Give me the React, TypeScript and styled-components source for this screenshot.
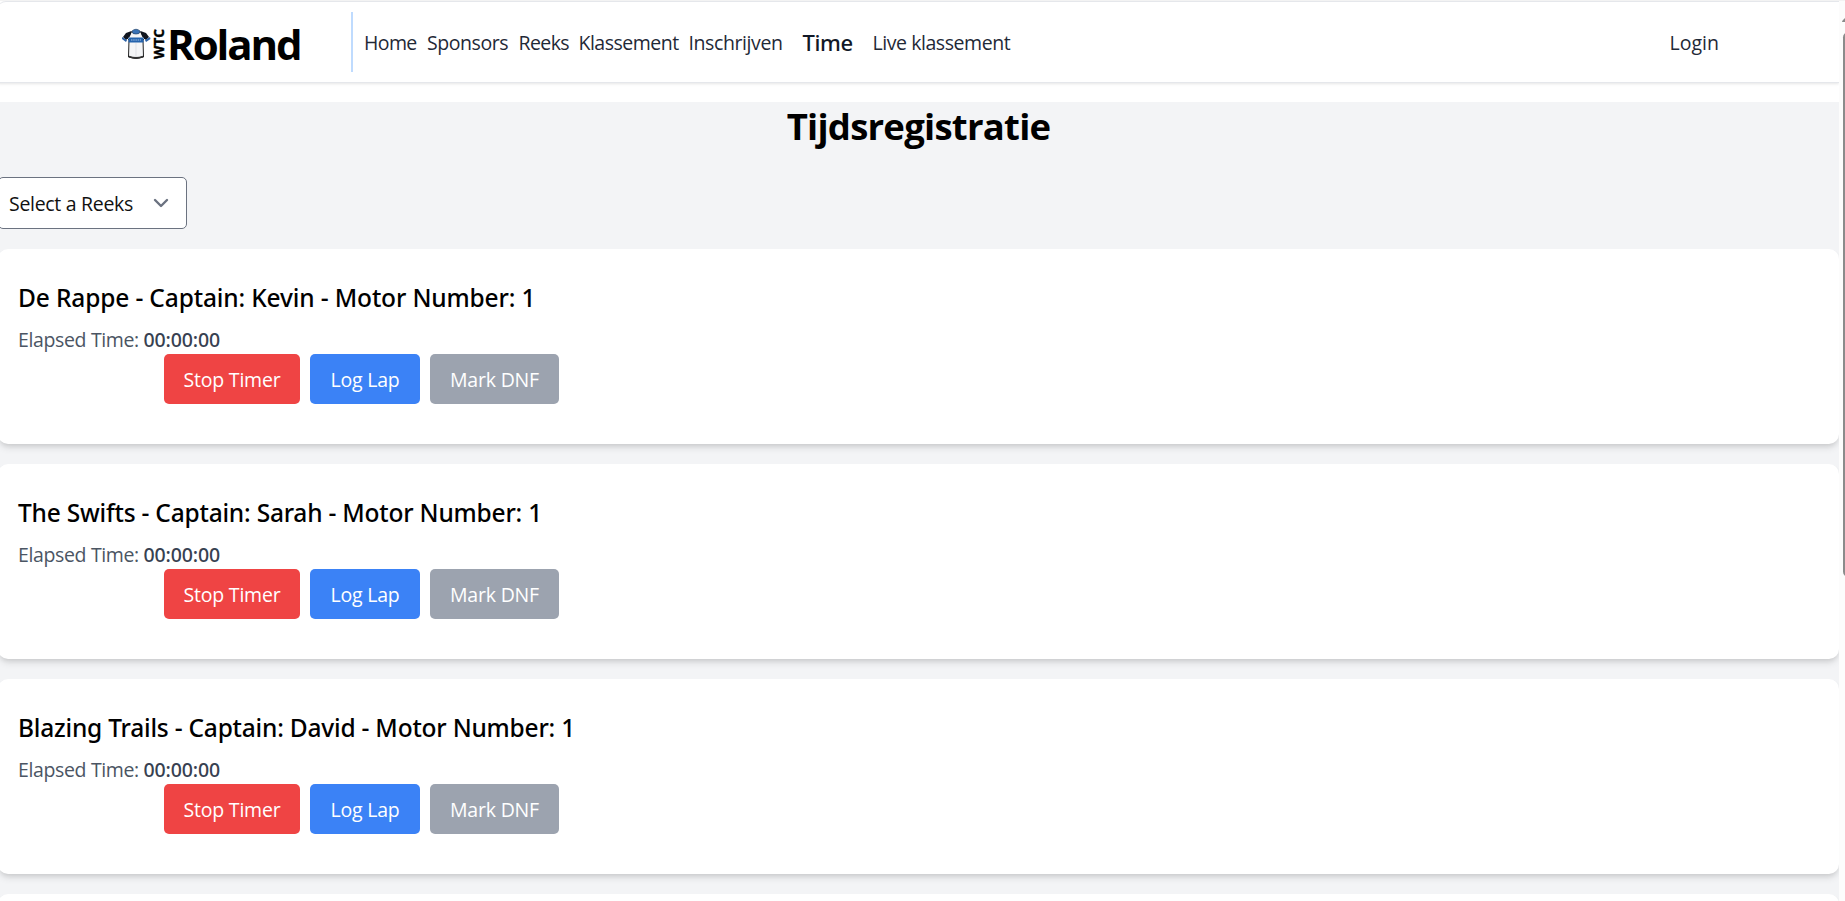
import React from 'react';
import styled, { createGlobalStyle } from 'styled-components';
import { ChevronDown } from 'lucide-react';

const GlobalStyle = createGlobalStyle`
  *, *::before, *::after { box-sizing: border-box; }
  body {
    margin: 0;
    height: 901px;
    overflow: hidden;
    background: #fff;
    color: #000;
    font: 400 19.5px/30px 'Open Sans', 'Noto Sans', sans-serif;
  }
`;

const Window = styled.div`
  display: flex;
  height: 901px;
  overflow: hidden;
  border-top: 1px solid #f3f3f3;
`;

const Page = styled.div`
  flex: 1;
  min-width: 0;
  margin-left: -2px;
  display: flex;
  flex-direction: column;
`;

const Header = styled.header`
  flex: none;
  display: flex;
  align-items: center;
  height: 82px;
  margin-bottom: 19px;
  padding: 0 120px 0 124px;
  border: 1px solid #e5e7eb;
  border-width: 1px 0;
  border-top-left-radius: 8px;
  box-shadow: 0 1px 3px rgba(0, 0, 0, 0.1);
`;

const Logo = styled.svg`
  flex: none;
  width: 181px;
  height: 70px;
`;

const LogoText = styled.text`
  font-family: 'Open Sans', sans-serif;
  font-weight: 700;
`;

const Nav = styled.nav`
  display: flex;
  align-items: center;
  height: 60px;
  margin-left: 48px;
  padding: 2px 0 0 11px;
  border-left: 2px solid #bfdbfe;
`;

const NavLink = styled.a<{ $width: number; $track: number; $active?: boolean }>`
  flex: none;
  width: ${(p) => p.$width}px;
  padding-left: ${(p) => (p.$active ? 9 : 0)}px;
  white-space: nowrap;
  color: ${(p) => (p.$active ? '#111827' : '#1f2937')};
  letter-spacing: ${(p) => p.$track}px;
  ${(p) => p.$active && "font: 500 22px/30px 'Noto Sans', sans-serif; padding-bottom: 2px;"}
`;

const Login = styled.a`
  margin-left: auto;
  padding-top: 2px;
  color: #1f2937;
`;

const Main = styled.main`
  flex: 1;
  min-height: 0;
  background: #f3f4f6;
`;

const Heading = styled.h1`
  margin: 0 0 30px;
  height: 45px;
  text-align: center;
  font-size: 36.5px;
  line-height: 48px;
  font-weight: 700;
  letter-spacing: -0.75px;
`;

const Select = styled.button`
  display: flex;
  align-items: center;
  justify-content: space-between;
  width: 189px;
  height: 52px;
  margin-bottom: 20px;
  padding: 1px 13px 0 10px;
  border: 1px solid #6b7280;
  border-radius: 5px;
  background: #fff;
  color: #111;
  font: inherit;
  letter-spacing: -0.3px;
`;

const SelectChevron = styled(ChevronDown)`
  margin-top: -2px;
`;

const CardList = styled.div`
  display: flex;
  flex-direction: column;
  gap: 20px;
`;

const Card = styled.section`
  flex: none;
  height: 195px;
  padding: 30px 20px 0;
  border-radius: 10px;
  background: #fff;
  box-shadow: 0 5px 7.5px -1px rgba(0, 0, 0, 0.1), 0 2.5px 5px -2px rgba(0, 0, 0, 0.1);
`;

const CardTitle = styled.h2<{ $track: number }>`
  margin: 0 0 10px;
  font: 500 24.5px/38px 'Noto Sans', sans-serif;
  letter-spacing: ${(p) => p.$track}px;
`;

const Elapsed = styled.p`
  margin: 0;
  height: 27px;
  line-height: 26px;
  color: #4b5563;
  letter-spacing: -0.36px;
`;

const ElapsedValue = styled.strong`
  font: 500 19.5px/26px 'Noto Sans', sans-serif;
  letter-spacing: -0.15px;
  color: #374151;
`;

const Actions = styled.div`
  display: flex;
  gap: 10px;
  padding-left: 146px;
`;

const ActionButton = styled.button<{ $color: string; $width: number }>`
  width: ${(p) => p.$width}px;
  height: 50px;
  padding: 1px 0 0;
  border: 0;
  border-radius: 5px;
  background: ${(p) => p.$color};
  color: #fff;
  font: inherit;
  letter-spacing: -0.2px;
`;

const Scrollbar = styled.aside`
  flex: none;
  width: 6px;
  padding: 15px 0 0 4px;
  background: #fcfcfc;
  overflow: hidden;
`;

const ScrollArrow = styled.svg`
  display: block;
  width: 11px;
  height: 6px;
  margin-left: -1px;
`;

const ScrollThumb = styled.div`
  width: 11px;
  height: 545px;
  margin-top: 10px;
  border-radius: 6px;
  background: #8b8b8b;
`;

const links = [
  { label: 'Home', width: 63, track: -0.6 },
  { label: 'Sponsors', width: 91.5, track: -0.44 },
  { label: 'Reeks', width: 60, track: -0.6 },
  { label: 'Klassement', width: 110, track: -0.5 },
  { label: 'Inschrijven', width: 105, track: -0.4 },
  { label: 'Time', width: 79, track: -0.4, active: true },
  { label: 'Live klassement', width: 140, track: -0.44 },
];

const teams = [
  { name: 'De Rappe', captain: 'Kevin', track: -0.14 },
  { name: 'The Swifts', captain: 'Sarah', track: -0.21 },
  { name: 'Blazing Trails', captain: 'David', track: -0.21 },
];

function BrandLogo() {
  return (
    <Logo viewBox="0 -16 181 70">
      <g strokeLinejoin="round">
        <path d="M9 9 L5 15 L7 17 L6.5 34 Q14 37 21.5 34 L21 17 L23 15 L19 9 Z" fill="#f4f5f7" stroke="#222" strokeWidth="1" />
        <path d="M9.5 8 L4 10 L1 14 L4 17 L7.5 14 L9 11Z M18.5 8 L24 10 L27 14 L24 17 L20.5 14 L19 11Z" fill="#10151f" />
        <path d="M0 14 L5 17 L4 19 L0 16Z M28 14 L23 17 L24 19 L28.5 16Z" fill="#2d62a5" />
        <path d="M10 8 Q14 4.5 18 8 L17 10.5 Q14 11.5 11 10.5Z" fill="#3972b6" stroke="#24466f" strokeWidth="0.7" />
        <path d="M6.5 14.5H21.5V19.5H6.5Z" fill="#2463ad" />
        <path d="M9 17H19" stroke="#9fc0e6" strokeDasharray="1.5 0.7" />
        <path d="M14 20V34" stroke="#d5d8dc" strokeWidth="0.7" />
        <path d="M7 33.5 Q14 36.5 21 33.5" fill="none" stroke="#333" strokeWidth="1.8" />
      </g>
      <LogoText transform="translate(41.5 36) rotate(-90)" fontSize="14" textLength="30" lengthAdjust="spacingAndGlyphs" stroke="#000" strokeWidth="0.4">WTC</LogoText>
      <LogoText x="45" y="36.7" fontSize="42" letterSpacing="-2.1">Roland</LogoText>
    </Logo>
  );
}

export default function App() {
  return (
    <>
      <GlobalStyle />
      <Window>
        <Page>
          <Header>
            <BrandLogo />
            <Nav>
              {links.map((l) => (
                <NavLink key={l.label} $width={l.width} $track={l.track} $active={l.active}>
                  {l.label}
                </NavLink>
              ))}
            </Nav>
            <Login>Login</Login>
          </Header>
          <Main>
            <Heading>Tijdsregistratie</Heading>
            <Select>
              Select a Reeks
              <SelectChevron size={24} color="#6b7280" strokeWidth={2.4} />
            </Select>
            <CardList>
              {teams.map((t) => (
                <Card key={t.name}>
                  <CardTitle $track={t.track}>
                    {t.name} - Captain: {t.captain} - Motor Number: 1
                  </CardTitle>
                  <Elapsed>
                    Elapsed Time: <ElapsedValue>00:00:00</ElapsedValue>
                  </Elapsed>
                  <Actions>
                    <ActionButton $color="#ef4444" $width={136}>Stop Timer</ActionButton>
                    <ActionButton $color="#3b82f6" $width={110}>Log Lap</ActionButton>
                    <ActionButton $color="#9ca3af" $width={129}>Mark DNF</ActionButton>
                  </Actions>
                </Card>
              ))}
              <Card />
            </CardList>
          </Main>
        </Page>
        <Scrollbar>
          <ScrollArrow viewBox="0 0 11 6">
            <path d="M0 6 Q0 5 1 4 L5 0 L10 6 Z" fill="#8b8b8b" />
          </ScrollArrow>
          <ScrollThumb />
        </Scrollbar>
      </Window>
    </>
  );
}
